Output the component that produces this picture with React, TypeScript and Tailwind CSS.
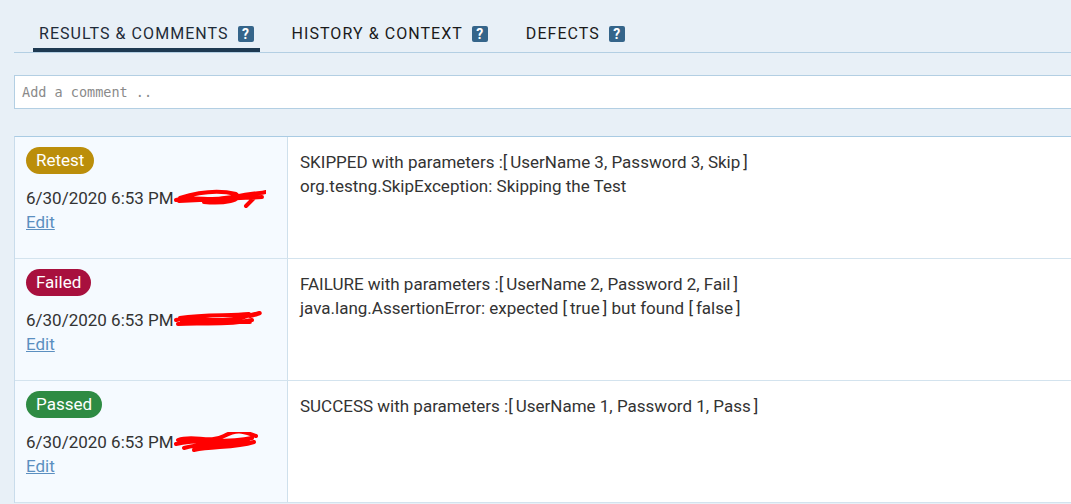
import React from "react";

const Help = () => (
  <span className="inline-flex h-[16px] w-[16px] shrink-0 items-center justify-center rounded-[2px] bg-[#35658a] text-[14px] font-bold leading-none text-white" style={{ fontFamily: "Roboto, sans-serif" }}>
    ?
  </span>
);

const Scribble = ({ variant }: { variant: number }) => {
  const paths = [
    "M2 12 C20 8, 40 14, 60 9 S85 6, 92 4 M6 10 C25 4, 45 2, 62 6 C70 12, 50 16, 30 14 C45 10, 65 8, 80 10 L72 18 M5 13 L88 9",
    "M2 10 C20 6, 45 14, 70 7 S85 4, 76 6 M4 14 C25 12, 50 16, 78 10 M6 8 C30 4, 55 6, 75 4 M8 12 C35 10, 60 12, 76 12",
    "M4 8 C20 2, 35 12, 50 4 S70 0, 82 4 M2 12 C25 6, 50 12, 78 6 M10 16 C30 10, 50 14, 74 8 M20 18 C40 14, 60 16, 80 10",
  ];
  return (
    <svg width="92" height="22" viewBox="0 0 92 22" className="absolute left-[148px] top-[2px]">
      <path d={paths[variant]} fill="none" stroke="#ff0000" strokeWidth="4" strokeLinecap="round" strokeLinejoin="round" />
    </svg>
  );
};

const L = () => <span className="mr-[3px]">[</span>;
const R = () => <span className="ml-[3px]">]</span>;

const rows = [
  {
    status: "Retest",
    color: "bg-[#bb8e0b]",
    lines: [
      <>SKIPPED with parameters :<L />UserName 3, Password 3, Skip<R /></>,
      <>org.testng.SkipException: Skipping the Test</>,
    ],
  },
  {
    status: "Failed",
    color: "bg-[#a8103e]",
    lines: [
      <>FAILURE with parameters :<L />UserName 2, Password 2, Fail<R /></>,
      <>java.lang.AssertionError: expected <L />true<R /> but found <L />false<R /></>,
    ],
  },
  {
    status: "Passed",
    color: "bg-[#2e8b43]",
    lines: [<>SUCCESS with parameters :<L />UserName 1, Password 1, Pass<R /></>],
  },
];

export default function App() {
  const body = { fontFamily: "Roboto, 'Liberation Sans', sans-serif" };
  return (
    <div className="h-[504px] w-[1071px] overflow-hidden bg-[#e8f0f7] pl-[14px] pt-[20px]" style={body}>
      <div className="w-[1100px]">
        <div className="flex gap-[26px] border-b border-[#b3cfe3] pl-[19px]">
          <div className="flex h-[32px] items-center gap-[9px] border-b-[4px] border-[#1e3a52] px-[6px]">
            <span className="text-[16px] tracking-[1.05px] text-[#1e2b38]">RESULTS &amp; COMMENTS</span>
            <Help />
          </div>
          <div className="flex h-[32px] items-center gap-[9px] border-b-[4px] border-transparent px-[6px]">
            <span className="text-[16px] tracking-[1.05px] text-[#1a1a1a]">HISTORY &amp; CONTEXT</span>
            <Help />
          </div>
          <div className="flex h-[32px] items-center gap-[9px] border-b-[4px] border-transparent px-[6px]">
            <span className="text-[16px] tracking-[1.05px] text-[#1a1a1a]">DEFECTS</span>
            <Help />
          </div>
        </div>

        <div className="mt-[22px] flex h-[34px] items-center border border-[#b3cfe3] bg-white px-[7px]">
          <span className="text-[13.5px] text-[#8a8a8a]" style={{ fontFamily: "'DejaVu Sans Mono', monospace" }}>
            Add a comment ..
          </span>
        </div>

        <div className="mt-[27px] border-l border-t border-l-[#c9dceb] border-t-[#a9cbe3] bg-white">
          {rows.map((r, i) => (
            <div key={r.status} className="flex h-[122px] border-b border-[#d3e3ee]">
              <div className="w-[273px] shrink-0 border-r border-[#cfe0ec] bg-[#f5faff] pl-[11px] pt-[10px]">
                <span className={`inline-flex h-[27px] items-center rounded-full px-[10px] text-[17px] text-white ${r.color}`}>
                  {r.status}
                </span>
                <div className="relative mt-[12px] text-[17px] leading-[24px] text-[#333]">
                  6/30/2020 6:53 PM
                  <Scribble variant={i} />
                </div>
                <a className="text-[17px] leading-[24px] text-[#5b8fc0] underline">Edit</a>
              </div>
              <div className="pl-[12px] pt-[13px] text-[17px] leading-[24px] text-[#333]">
                {r.lines.map((l, j) => (
                  <div key={j}>{l}</div>
                ))}
              </div>
            </div>
          ))}
        </div>
      </div>
    </div>
  );
}
